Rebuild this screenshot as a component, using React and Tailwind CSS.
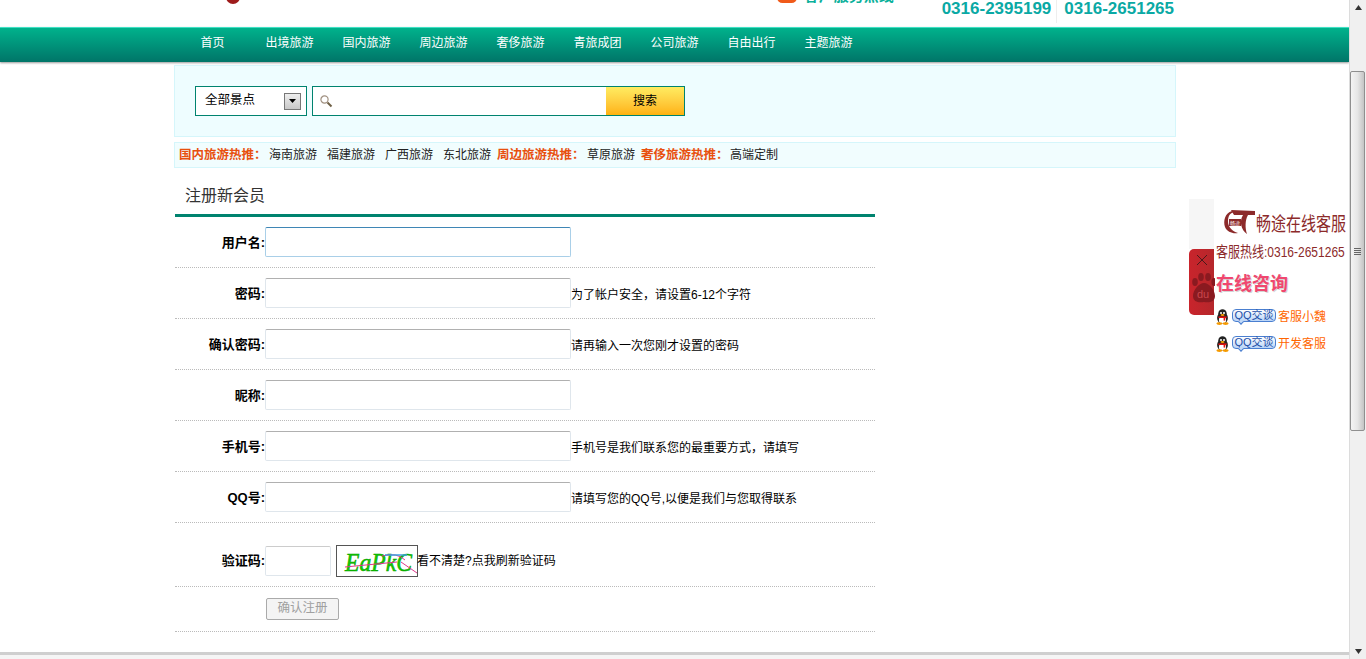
const font = "font-['Liberation_Sans','Noto_Sans_CJK_SC',sans-serif]";
const navItems = ["首页","出境旅游","国内旅游","周边旅游","奢侈旅游","青旅成团","公司旅游","自由出行","主题旅游"];

function QQPenguin() {
  return (
    <svg width="15" height="16" viewBox="0 0 15 16">
      <ellipse cx="7.5" cy="9" rx="5.4" ry="6" fill="#222" />
      <ellipse cx="7.5" cy="11" rx="3.6" ry="3.8" fill="#fff" />
      <ellipse cx="7.5" cy="4.4" rx="4.2" ry="4.2" fill="#222" />
      <circle cx="6" cy="4" r="1" fill="#fff" />
      <circle cx="9" cy="4" r="1" fill="#fff" />
      <ellipse cx="7.5" cy="6" rx="2" ry="1" fill="#f5a000" />
      <rect x="3.4" y="7.4" width="8.2" height="1.6" fill="#e01010" />
      <rect x="8.6" y="8.6" width="1.6" height="3" fill="#e01010" />
      <ellipse cx="4.4" cy="14.6" rx="3" ry="1.3" fill="#f59a00" />
      <ellipse cx="10.6" cy="14.6" rx="3" ry="1.3" fill="#f59a00" />
    </svg>
  );
}

function QQRow({ label, mt }) {
  return (
    <div className={`flex items-center ${mt}`}>
      <QQPenguin />
      <span className="relative ml-[2px] mt-[-3px] flex h-[13px] w-[44px] items-center justify-center rounded-[4px] border border-[#4a7fd0] bg-gradient-to-b from-[#ffffff] to-[#b9d4f7] text-[11px] leading-none text-[#1d4fa8]">
        QQ交谈
        <span className="absolute -bottom-[3px] left-[6px] h-[4px] w-[4px] rotate-45 border-b border-r border-[#4a7fd0] bg-[#c6dcf8]"></span>
      </span>
      <span className="ml-[2px] mt-[-1px] text-[12px] leading-none text-[#ff6600]">{label}</span>
    </div>
  );
}

function SidePanel() {
  return (
    <div className="absolute left-[1189px] top-[199px] flex">
      <div className="w-[25px]">
        <div className="h-[50px] bg-[#f6f6f6]"></div>
        <div className="flex h-[66px] flex-col items-center rounded-l-[5px] bg-gradient-to-r from-[#c9242c] to-[#b5272b] pt-[4px]">
          <svg width="14" height="14" viewBox="0 0 14 14" stroke="#4a1a1a" strokeWidth="1" fill="none">
            <path d="M2 2 L12 12 M12 2 L2 12" />
          </svg>
          <svg className="ml-[1px] mt-[5px]" width="25" height="32" viewBox="0 0 25 32" fill="#8a1a20">
            <ellipse cx="5" cy="10" rx="2.8" ry="4" />
            <ellipse cx="11" cy="5" rx="2.8" ry="4" />
            <ellipse cx="18" cy="5" rx="2.8" ry="4" />
            <ellipse cx="24" cy="10" rx="2.6" ry="4" />
            <path d="M14 11 C9 11 3 18 3 24 C3 30 9 31 14 30 C19 31 25 30 25 24 C25 18 19 11 14 11 Z" />
            <text x="7" y="26" fontSize="11" fontFamily="'Liberation Sans', sans-serif" fill="#c9464c">du</text>
          </svg>
        </div>
      </div>
      <div className="ml-[1px] w-[134px]">
        <div className="flex h-[38px] items-start">
          <svg className="ml-[7px] mt-[9px] shrink-0" width="34" height="28" viewBox="0 0 34 28">
            <path d="M10 3 C3 5 1 13 3 19 C5 24 11 26 16 25 C10 23 6 19 6 13 C6 8 8 5 12 4 Z" fill="#8c2a2a" />
            <path d="M9 2 L33 3 L33 7 L26 7 C23 12 23 20 25 26 C19 22 17 13 21 7 L12 7 Z" fill="#8c2a2a" />
            <rect x="7" y="11" width="12" height="7" fill="#8c2a2a" />
            <text x="8" y="16.5" fontSize="5" fill="#ffffff">畅途</text>
          </svg>
          <span className="ml-[0px] mt-[15px] origin-center scale-y-[1.3] whitespace-nowrap text-[15px] leading-[20px] text-[#8c2a2a]">畅途在线客服</span>
        </div>
        <div className="mt-[6px] ml-[1px] origin-center scale-y-[1.2] whitespace-nowrap text-[12px] leading-[18px] text-[#8c2a2a]">客服热线:0316-2651265</div>
        <div className="ml-[1px] mt-[13px] text-[18px] font-bold leading-[20px] text-[#f0476f] [text-shadow:1px_1px_0_#d4d4d4]">在线咨询</div>
        <QQRow label="客服小魏" mt="mt-[15px]" />
        <QQRow label="开发客服" mt="mt-[11px]" />
      </div>
    </div>
  );
}

function Scrollbar() {
  return (
    <div className="flex h-full w-[17px] shrink-0 flex-col border-l border-[#dcdcdc] bg-[#f0f0f0]">
      <div className="flex h-[71px] justify-center pt-[5px]">
        <svg width="7" height="5" viewBox="0 0 7 5"><path d="M3.5 0 L7 5 L0 5 Z" fill="#333" /></svg>
      </div>
      <div className="flex h-[360px] w-[15px] items-center justify-center rounded-[2px] border border-[#8f8f8f] bg-gradient-to-r from-[#f4f4f4] via-[#e6e6e6] to-[#c4c4c4]">
        <div className="flex flex-col gap-[1px]">
          <div className="h-[1px] w-[7px] bg-[#666]"></div>
          <div className="h-[1px] w-[7px] bg-[#666]"></div>
          <div className="h-[1px] w-[7px] bg-[#666]"></div>
          <div className="h-[1px] w-[7px] bg-[#666]"></div>
        </div>
      </div>
      <div className="flex flex-1 items-end justify-center pb-[5px]">
        <svg width="7" height="5" viewBox="0 0 7 5"><path d="M0 0 L7 0 L3.5 5 Z" fill="#333" /></svg>
      </div>
    </div>
  );
}

function Row({ label, note, focus }) {
  return (
    <div className="flex h-[51px] items-center border-b border-dotted border-[#bbbbbb] pl-[1px]">
      <label className="mt-[1px] w-[89px] text-right text-[13px] font-bold leading-[16px] text-black">{label}:</label>
      <div className={`h-[30px] w-[306px] shrink-0 rounded-[2px] border bg-white ${focus ? "border-[#a9cfe8] border-t-[#3f86b5]" : "border-[#dfe6ec] border-t-[#b0b0b0]"}`}></div>
      {note && <span className="mt-[3px] text-[12px] text-black">{note}</span>}
    </div>
  );
}

export default function App() {
  return (
    <div className={`relative flex h-[659px] w-[1366px] overflow-hidden bg-white ${font}`}>
      <div className="flex min-w-0 flex-1 flex-col">
        {/* header */}
        <div className="relative flex h-[27px] shrink-0 justify-between overflow-hidden">
          <div className="ml-[226px] mt-[-4px] h-[8px] w-[14px] rounded-b-full bg-[#9e1b1b]"></div>
          <div className="mr-[175px] flex items-start">
            <div className="mt-[-8px] h-[11px] w-[20px] rounded-full bg-[#f05a1a]"></div>
            <span className="ml-[7px] mt-[-13px] text-[15px] font-bold leading-[18px] text-[#0ab09a]">客户服务热线</span>
            <div className="ml-[48px] flex items-start text-[17px] font-bold leading-[17px] text-[#0aa9a4]">
              <span className="h-[23px]">0316-2395199</span>
              <span className="ml-[5px] h-[23px] border-l border-[#eeeeee] pl-[7px]">0316-2651265</span>
            </div>
          </div>
        </div>
        {/* nav */}
        <div className="flex h-[35px] shrink-0 border-t border-[#3fe0c4] bg-gradient-to-b from-[#00b28c] to-[#007568] pb-[4px] pl-[174px] shadow-[0_1px_2px_#999999]">
          {navItems.map((t) => (
            <a key={t} className="flex w-[77px] items-center justify-center text-[12px] text-white">{t}</a>
          ))}
        </div>
        {/* search + hot */}
        <div className="ml-[174px] mt-[3px] flex h-[72px] w-[1002px] shrink-0 items-start border border-[#d5f6fb] bg-[#eefdff] pl-[20px] pt-[20px]">
          <div className="flex h-[30px] w-[112px] items-center justify-between border border-[#00836f] bg-white pl-[9px] pr-[5px]">
            <span className="mb-[1px] text-[12.5px] text-black">全部景点</span>
            <span className="flex h-[17px] w-[17px] items-center justify-center border border-[#777777] bg-gradient-to-b from-[#eeeeee] to-[#c8c8c8]">
              <svg width="7" height="4" viewBox="0 0 7 4"><path d="M0 0 L7 0 L3.5 4 Z" fill="#000" /></svg>
            </span>
          </div>
          <div className="ml-[5px] flex h-[30px] w-[373px] items-center border border-[#00836f] bg-white">
            <svg className="ml-[6px]" width="14" height="14" viewBox="0 0 14 14" fill="none">
              <circle cx="5.5" cy="5.5" r="3.6" stroke="#a09080" strokeWidth="1.2" />
              <path d="M8.5 8.5 L12.5 12.5" stroke="#6f5f45" strokeWidth="2" />
            </svg>
            <div className="flex-1"></div>
            <div className="flex h-full w-[78px] items-center justify-center bg-gradient-to-b from-[#ffec60] to-[#ffb20c] text-[12px] text-black">搜索</div>
          </div>
        </div>
        <div className="ml-[174px] mt-[5px] flex h-[26px] w-[1002px] shrink-0 items-center whitespace-nowrap border border-[#d5f6fb] bg-[#f1fdfe] pl-[4px] text-[12px] text-[#222222]">
          <b className="w-[80px] text-[12.5px] text-[#e8500e]">国内旅游热推：</b>
          <a className="ml-[10px]">海南旅游</a>
          <a className="ml-[10px]">福建旅游</a>
          <a className="ml-[10px]">广西旅游</a>
          <a className="ml-[10px]">东北旅游</a>
          <b className="ml-[6px] w-[80px] text-[12.5px] text-[#e8500e]">周边旅游热推：</b>
          <a className="ml-[10px]">草原旅游</a>
          <b className="ml-[6px] w-[80px] text-[12.5px] text-[#e8500e]">奢侈旅游热推：</b>
          <a className="ml-[9px]">高端定制</a>
        </div>
        {/* form */}
        <div className="ml-[175px] w-[700px] shrink-0">
          <h2 className="flex h-[49px] items-center border-b-[3px] border-[#00836f] pl-[10px] pt-[9px] text-[16px] font-normal text-[#333333]">注册新会员</h2>
          <Row label="用户名" focus />
          <Row label="密码" note={"为了帐户安全，请设置6-12个字符"} />
          <Row label="确认密码" note={"请再输入一次您刚才设置的密码"} />
          <Row label="昵称" />
          <Row label="手机号" note={"手机号是我们联系您的最重要方式，请填写"} />
          <Row label="QQ号" note={"请填写您的QQ号,以便是我们与您取得联系"} />
          <div className="flex h-[64px] items-center border-b border-dotted border-[#bbbbbb] pl-[1px] pt-[13px]">
            <label className="w-[89px] text-right text-[13px] font-bold leading-[16px] text-black">验证码:</label>
            <div className="h-[30px] w-[66px] shrink-0 rounded-[2px] border border-[#dfe6ec] border-t-[#cccccc] bg-white"></div>
            <svg className="ml-[5px] shrink-0 border border-[#555555]" width="82" height="32" viewBox="0 0 80 30">
              <text x="8" y="25" textLength="67" lengthAdjust="spacingAndGlyphs" fontFamily="'Liberation Serif', serif" fontStyle="italic" fontSize="25" fill="#14c800" stroke="#00a000" strokeWidth="0.5">EaPkC</text>
              <path d="M8 21 L60 16 M45 10 Q60 6 68 14" stroke="#e0368a" strokeWidth="1" fill="none" />
              <path d="M48 9 L70 9" stroke="#3aa0e0" strokeWidth="1.5" fill="none" />
              <path d="M64 16 L80 27" stroke="#e0368a" strokeWidth="1" fill="none" />
            </svg>
            <span className="ml-[-1px] text-[12px] text-black">看不清楚?点我刷新验证码</span>
          </div>
          <div className="flex h-[45px] items-center border-b border-dotted border-[#bbbbbb] pl-[91px]">
            <button className="h-[22px] w-[73px] rounded-[2px] border border-[#aaaaaa] bg-[#f4f4f4] pb-[2px] text-[12.5px] text-[#a0a0a0]">确认注册</button>
          </div>
        </div>
        <div className="flex-1"></div>
        <div className="h-[7px] shrink-0 border-t-[3px] border-[#cfcfcf] bg-[#f5f5f5]"></div>
      </div>
      <Scrollbar />
      <SidePanel />
    </div>
  );
}
